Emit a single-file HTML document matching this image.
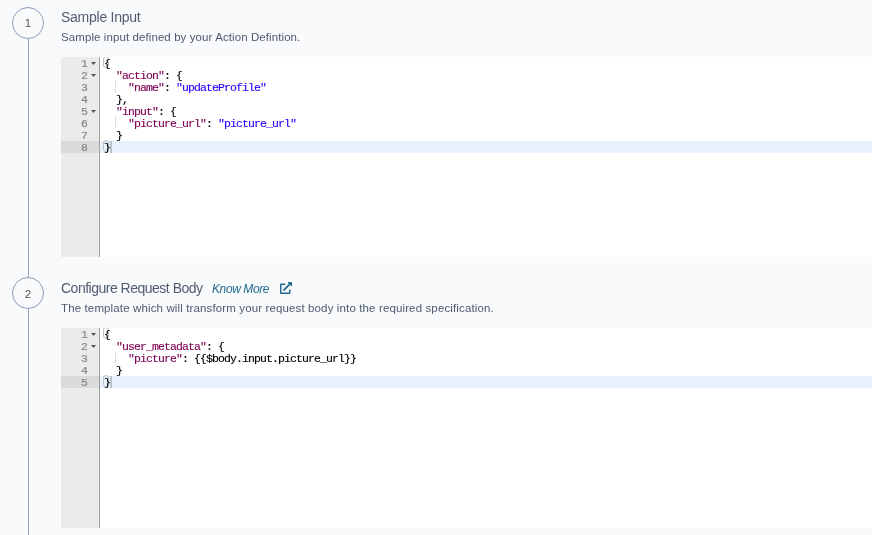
<!DOCTYPE html>
<html lang="en">
<head>
<meta charset="utf-8">
<title>Configure Request Body</title>
<style>
  html, body { margin: 0; padding: 0; }
  body {
    width: 872px; height: 535px; overflow: hidden; position: relative;
    background: #f8fafb;
    font-family: "Liberation Sans", sans-serif;
    color: #4a5568;
  }
  #page { position: absolute; left: 0; top: 0; width: 872px; height: 535px; overflow: hidden; will-change: transform; }
  .rail { position: absolute; left: 28px; width: 1px; background: #8c9eb9; }
  .num {
    position: absolute; left: 12px; width: 32px; height: 32px; box-sizing: border-box;
    border: 1px solid #8c9eb9; border-radius: 50%; background: #f8fafb;
    font-size: 11.5px; line-height: 32px; text-align: center; color: #555;
  }
  .title { position: absolute; left: 61px; font-size: 14px; line-height: 18px; white-space: nowrap; color: #525d72; }
  .desc  { position: absolute; left: 61px; font-size: 11.5px; line-height: 16px; white-space: nowrap; color: #4d5a70; }
  .know  { position: absolute; font-size: 12px; line-height: 16px; font-style: italic; color: #236a8e; white-space: nowrap; text-decoration: none; }
  .ext   { position: absolute; width: 12px; height: 12px; }

  .ace { position: absolute; left: 61px; width: 811px; height: 200px; background: #fff; overflow: hidden;
         font-family: "Liberation Mono", monospace; font-size: 11.5px; line-height: 14px; letter-spacing: -0.9px; }
  .gutter { position: absolute; left: 0; top: 0; bottom: 0; width: 39px; box-sizing: border-box;
            background: #ebebeb; border-right: 1px solid #9f9f9f; color: #888; }
  .gl { position: relative; height: 12px; padding-left: 20px; white-space: pre; font-size: 11.5px; -webkit-text-stroke: 0.2px; }
  .gl.act { background: #dadada; }
  .fold { position: absolute; left: 30px; top: 5px; width: 5px; height: 3px; background: #555;
          clip-path: polygon(0 0, 100% 0, 50% 100%); }
  .content { position: absolute; left: 39px; top: 0; right: 0; bottom: 0; }
  .ln { position: relative; z-index: 0; height: 12px; padding-left: 4px; white-space: pre; color: #000; -webkit-text-stroke: 0.15px; }
  .ln.act { background: #e8f2fe; }
  .v { color: #7f0055; }
  .s { color: #2a00ff; }
  .guide { position: absolute; left: 15px; top: 0; width: 1px; height: 12px;
           background: repeating-linear-gradient(to bottom, #bfbfbf 0, #bfbfbf 1px, transparent 1px, transparent 2px); }
  .brk { position: absolute; z-index: -1; left: 3px; top: -1px; width: 6px; height: 12px; box-sizing: border-box;
         border: 1px solid #c0c0c0; border-radius: 3px; }
  .cur { position: absolute; left: 10px; top: 0; width: 2px; height: 12px; background: rgba(0,0,0,0.2); }
</style>
</head>
<body>
<div id="page">
  <div class="rail" style="top:39px;height:238px"></div>
  <div class="rail" style="top:309px;height:226px"></div>

  <div class="num" style="top:7px;line-height:30px">1</div>
  <div class="title" id="t1" style="top:8px;letter-spacing:-0.25px">Sample Input</div>
  <div class="desc" id="d1" style="top:29px;letter-spacing:0.09px">Sample input defined by your Action Defintion.</div>

  <div class="ace" style="top:57px">
    <div class="gutter">
      <div class="gl">1<i class="fold"></i></div>
      <div class="gl">2<i class="fold"></i></div>
      <div class="gl">3</div>
      <div class="gl">4</div>
      <div class="gl">5<i class="fold"></i></div>
      <div class="gl">6</div>
      <div class="gl">7</div>
      <div class="gl act">8</div>
    </div>
    <div class="content">
      <div class="ln"><i class="brk"></i>{</div>
      <div class="ln">  <span class="v">"action"</span>: {</div>
      <div class="ln"><i class="guide"></i>    <span class="v">"name"</span>: <span class="s">"updateProfile"</span></div>
      <div class="ln">  },</div>
      <div class="ln">  <span class="v">"input"</span>: {</div>
      <div class="ln"><i class="guide"></i>    <span class="v">"picture_url"</span>: <span class="s">"picture_url"</span></div>
      <div class="ln">  }</div>
      <div class="ln act"><i class="brk"></i><i class="cur"></i>}</div>
    </div>
  </div>

  <div class="num" style="top:277px">2</div>
  <div class="title" id="t2" style="top:279px;letter-spacing:-0.5px">Configure Request Body</div>
  <a class="know" id="k" style="left:212px;top:281px;letter-spacing:-0.4px">Know More</a>
  <svg class="ext" style="left:279.5px;top:282px" viewBox="0 0 512 512"><path fill="#236a8e" d="M432,320H400a16,16,0,0,0-16,16V448H64V128H208a16,16,0,0,0,16-16V80a16,16,0,0,0-16-16H48A48,48,0,0,0,0,112V464a48,48,0,0,0,48,48H400a48,48,0,0,0,48-48V336A16,16,0,0,0,432,320ZM488,0h-128c-21.37,0-32.05,25.91-17,41l35.73,35.73L135,320.37a24,24,0,0,0,0,34L157.67,377a24,24,0,0,0,34,0L435.28,133.32,471,169c15,15,41,4.5,41-17V24A24,24,0,0,0,488,0Z"/></svg>
  <div class="desc" id="d2" style="top:300px;letter-spacing:0.13px">The template which will transform your request body into the required specification.</div>

  <div class="ace" style="top:328px">
    <div class="gutter">
      <div class="gl">1<i class="fold"></i></div>
      <div class="gl">2<i class="fold"></i></div>
      <div class="gl">3</div>
      <div class="gl">4</div>
      <div class="gl act">5</div>
    </div>
    <div class="content">
      <div class="ln"><i class="brk"></i>{</div>
      <div class="ln">  <span class="v">"user_metadata"</span>: {</div>
      <div class="ln"><i class="guide"></i>    <span class="v">"picture"</span>: {{$body.input.picture_url}}</div>
      <div class="ln">  }</div>
      <div class="ln act"><i class="brk"></i><i class="cur"></i>}</div>
    </div>
  </div>
</div>
</body>
</html>
